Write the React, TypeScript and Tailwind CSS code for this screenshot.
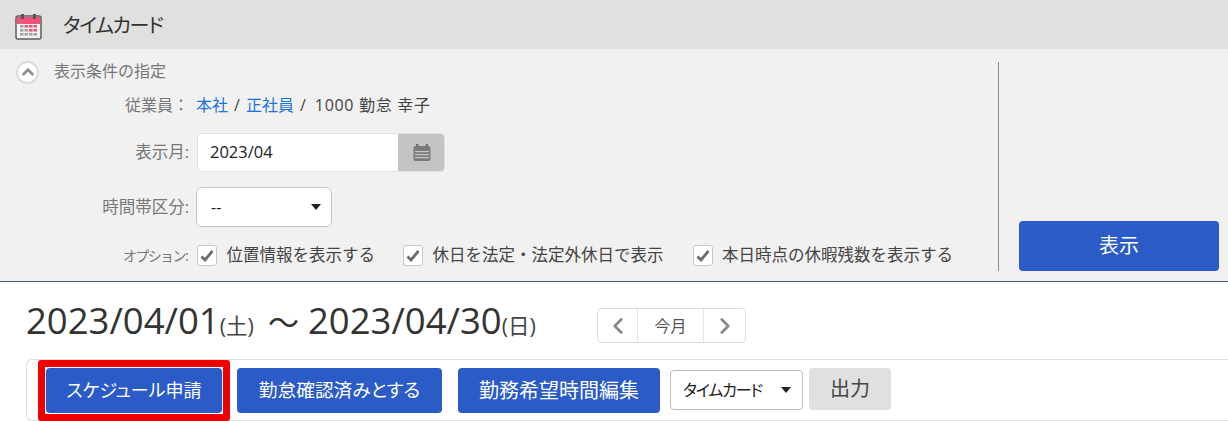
import { ChevronLeft, ChevronRight, ChevronUp } from 'lucide-react'

const font = { fontFamily: '"Open Sans", "Noto Sans CJK JP", sans-serif' }

function CalendarLogo() {
  return (
    <svg width="27" height="27" viewBox="0 0 27 27" className="shrink-0">
      <rect x="1" y="3" width="25" height="23" rx="2" fill="#f4f2f2" stroke="#5c5c5c" strokeWidth="1.5" />
      <rect x="2" y="4" width="23" height="7" fill="#f0527a" />
      <rect x="6" y="1" width="3" height="5" fill="#555" />
      <rect x="18" y="1" width="3" height="5" fill="#555" />
      {[0, 1, 2, 3].map(col => [0, 1, 2].map(row => (
        <rect key={`${col}-${row}`} x={5 + col * 4.5} y={12 + row * 4} width="3.5" height="2.6"
          fill={(row === 0 && col > 0) || (row === 1 && col > 1) ? '#f0527a' : '#a3a3a3'} />
      )))}
    </svg>
  )
}

function SmallCalendar() {
  return (
    <svg width="18" height="17" viewBox="0 0 18 17">
      <rect x="3" y="0" width="2.4" height="4" fill="#707070" />
      <rect x="12.6" y="0" width="2.4" height="4" fill="#707070" />
      <rect x="0.5" y="2" width="17" height="15" rx="2" fill="#7a7a7a" />
      <rect x="2" y="7" width="14" height="1.2" fill="#c8c8c8" />
      <rect x="2" y="10" width="14" height="1.2" fill="#c8c8c8" />
      <rect x="2" y="13" width="14" height="1.2" fill="#c8c8c8" />
    </svg>
  )
}

function Caret() {
  return <span className="w-0 h-0 border-l-[5px] border-r-[5px] border-t-[6px] border-l-transparent border-r-transparent border-t-[#222]" />
}

function Check({ label, className }: { label: string; className?: string }) {
  return (
    <div className={`flex items-center ${className || ''}`}>
      <span className="w-[20px] h-[21px] bg-white border border-[#c8c8c8] rounded-[3px] flex items-center justify-center">
        <svg width="14" height="13" viewBox="0 0 14 13">
          <path d="M1.5 7.5 L5 11 L12.5 2" fill="none" stroke="#6a6a6a" strokeWidth="2.8" />
        </svg>
      </span>
      <span className="ml-[9.5px] text-[16.5px] leading-none text-[#444]">{label}</span>
    </div>
  )
}

function Label({ children, className }: { children: string; className?: string }) {
  return <div className={`w-[189px] shrink-0 text-right text-[#777] ${className || 'text-[16.5px]'}`}>{children}</div>
}

function BlueButton({ label, className }: { label: string; className: string }) {
  return (
    <button className={`h-[45px] bg-[#2a5bc6] text-white rounded-[4px] [font-feature-settings:'palt'] ${className}`}>{label}</button>
  )
}

export default function App() {
  return (
    <div style={font} className="w-[1228px] h-[421px] overflow-hidden bg-white">
      <div className="h-[49px] bg-[#e0e0de] flex items-center pl-[15px] pt-[3px]">
        <CalendarLogo />
        <h1 className="ml-[21px] text-[20px] text-[#333] tracking-[-1.3px] [font-feature-settings:'palt']">タイムカード</h1>
      </div>

      <div className="h-[233px] bg-[#f1f1f1] border-b border-[#3b6499] flex pt-[13px]">
        <div className="w-[999px] h-[209px] border-r border-[#8a8a8a]">
          <div className="flex items-center pl-[16px] h-[20px]">
            <span className="w-[23px] h-[23px] rounded-full bg-white border-2 border-[#dcdcdc] flex items-center justify-center">
              <ChevronUp size={18} strokeWidth={3.5} className="text-[#8c8c8c]" />
            </span>
            <span className="ml-[15px] text-[16px] text-[#777] -mt-[2px]">表示条件の指定</span>
          </div>

          <div className="flex items-center mt-[11px] h-[24px]">
            <Label className="text-[16px]">従業員：</Label>
            <div className="ml-[7px] text-[16px] text-[#444] whitespace-pre">
              <span className="text-[#1f72d8]">本社</span>
              <span className="mx-[6px]">/</span>
              <span className="text-[#1f72d8]">正社員</span>
              <span className="ml-[6px] mr-[9px]">/</span>
              <span className="tracking-[0.7px]">1000 勤怠 幸子</span>
            </div>
          </div>

          <div className="flex items-center mt-[16px]">
            <Label>表示月:</Label>
            <div className="ml-[8px] w-[248px] h-[39px] flex rounded-[4px] overflow-hidden bg-white border border-[#e2e2e2]">
              <div className="flex-1 flex items-center pl-[12px] text-[16.5px] text-[#222]">2023/04</div>
              <div className="w-[47px] -mr-px bg-[#c4c4c4] flex items-center justify-center">
                <SmallCalendar />
              </div>
            </div>
          </div>

          <div className="flex items-center mt-[15px]">
            <Label>時間帯区分:</Label>
            <div className="ml-[7px] w-[136px] h-[40px] bg-white border border-[#c4c4c4] rounded-[6px] flex items-center justify-between pl-[14px] pr-[10px] text-[16px] text-[#222]">
              <span>--</span>
              <Caret />
            </div>
          </div>

          <div className="flex items-center mt-[18px]">
            <Label className="text-[14px] tracking-[-1.6px] pr-[2px]">オプション:</Label>
            <Check label="位置情報を表示する" className="ml-[8px]" />
            <Check label="休日を法定・法定外休日で表示" className="ml-[28px]" />
            <Check label="本日時点の休暇残数を表示する" className="ml-[29px]" />
          </div>
        </div>

        <div className="flex-1 flex items-end pl-[20px] pb-[10px]">
          <button className="w-[200px] h-[50px] bg-[#2a5bc6] text-white text-[20px] rounded-[4px]">表示</button>
        </div>
      </div>

      <div className="flex items-center h-[77px] pl-[26px]">
        <div className="text-[#333] text-[36.5px] leading-none whitespace-nowrap flex items-baseline w-[571px] -mt-[1px]">
          2023/04/01<span className="text-[21.5px] text-[#444]">(土)</span>
          <span className="ml-[14px] mr-[9px] text-[31px]">～</span>
          2023/04/30<span className="text-[21.5px] text-[#444]">(日)</span>
        </div>
        <div className="w-[149px] h-[35px] mt-[10px] bg-white border border-[#dcdcdc] rounded-[4px] flex items-center text-[#555]">
          <div className="w-[40px] h-full flex items-center justify-center border-r border-[#e4e4e4]">
            <ChevronLeft size={26} strokeWidth={2.5} className="text-[#888]" />
          </div>
          <div className="flex-1 text-center text-[16px]">今月</div>
          <div className="w-[42px] h-full flex items-center justify-center border-l border-[#e4e4e4]">
            <ChevronRight size={26} strokeWidth={2.5} className="text-[#888]" />
          </div>
        </div>
      </div>

      <div className="ml-[26px] h-[62px] border border-r-0 border-[#dedede] rounded-l-[6px] flex items-start pl-[11px]">
        <div className="h-[61px] border-[7px] border-[#f00000] rounded-[3px] p-[1px] shrink-0 w-[192px]">
          <BlueButton label="スケジュール申請" className="w-full text-[18px]" />
        </div>
        <BlueButton label="勤怠確認済みとする" className="w-[205px] ml-[7px] mt-[8px] text-[18.7px]" />
        <BlueButton label="勤務希望時間編集" className="w-[202px] ml-[16px] mt-[8px] text-[20px]" />
        <div className="w-[133px] h-[40px] ml-[10px] mt-[10px] bg-white border border-[#bdbdbd] rounded-[4px] flex items-center justify-between pl-[12px] pr-[11px] text-[16px] text-[#222] tracking-[-1.2px] [font-feature-settings:'palt']">
          <span>タイムカード</span>
          <Caret />
        </div>
        <button className="w-[82px] h-[42px] ml-[6px] mt-[8px] bg-[#e0e0e0] text-[#444] text-[20px] rounded-[4px]">出力</button>
      </div>
    </div>
  )
}
